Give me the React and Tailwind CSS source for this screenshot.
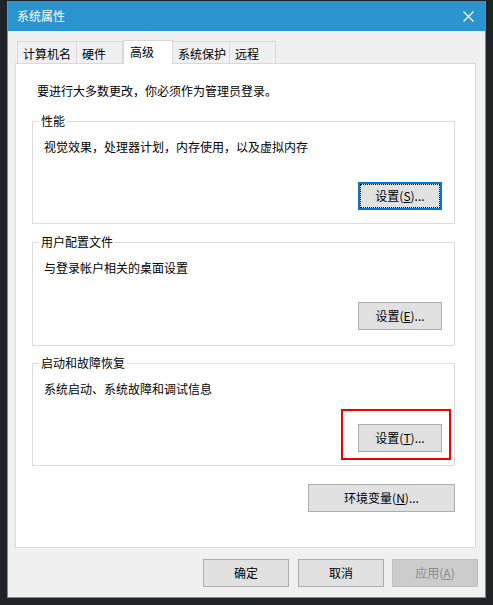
const font = { fontFamily: '"Microsoft YaHei", "Noto Sans CJK SC", "Noto Sans", sans-serif' };

function Btn({ children, focused = false, disabled = false, className = "" }) {
    if (focused) {
        return (
            <button className={`relative h-[28px] w-[84px] bg-[#e1e1e1] border-2 border-[#0078d7] text-[12px] leading-[16px] text-black ${className}`}>
                <span className="absolute inset-0 border border-dotted border-black"></span>
                <span className="relative">{children}</span>
            </button>
        );
    }
    return (
        <button className={`h-[28px] w-[84px] border text-[12px] leading-[16px] ${disabled ? "bg-[#cccccc] border-[#bfbfbf] text-[#8a8a8a]" : "bg-[#e1e1e1] border-[#adadad] text-black"} ${className}`}>
            {children}
        </button>
    );
}

function Group({ title, desc, children, className = "" }) {
    return (
        <div className={`relative ml-[16px] w-[423px] h-[103px] border border-[#dcdcdc] flex flex-col ${className}`}>
            <span className="absolute -top-[9px] left-[6px] bg-white px-[2px] text-[12px] leading-[16px] text-black">{title}</span>
            <p className="pt-[17px] pl-[11px] text-[12px] leading-[16px] text-black">{desc}</p>
            {children}
        </div>
    );
}

const tabs = [
    { name: "计算机名", w: "w-[60px]" },
    { name: "硬件", w: "w-[47px]" },
    { name: "高级", w: "w-[50px]", active: true },
    { name: "系统保护", w: "w-[58px]" },
    { name: "远程", w: "w-[47px]" },
];

export default function App() {
    return (
        <div className="w-[493px] h-[605px] bg-[#1f2227] overflow-hidden pt-[1px] pl-[7px]" style={font}>
            <div className="w-[479px] h-[597px] border border-[#4f97c9] border-t-0 bg-[#f0f0f0] flex flex-col">
                {/* title bar */}
                <div className="h-[30px] bg-[#2b94cf] flex items-center justify-between pl-[9px] pr-[10px]">
                    <span className="text-[12px] leading-[16px] text-white">系统属性</span>
                    <svg width="11" height="11" viewBox="0 0 11 11" className="mr-[1px]">
                        <path d="M0.5 0.5L10.5 10.5M10.5 0.5L0.5 10.5" stroke="white" strokeWidth="1.2" />
                    </svg>
                </div>

                <div className="pl-[7px] pt-[9px]">
                    {/* tabs */}
                    <div className="flex items-end pl-[2px] h-[23px]">
                        {tabs.map((t) => (
                            <div
                                key={t.name}
                                className={`${t.w} border border-[#d9d9d9] text-[12px] leading-[16px] text-black ${t.active ? "h-[24px] bg-white border-b-0 relative z-10 -mb-[1px] pl-[6px] pt-[3px]" : "h-[22px] bg-[#f0f0f0] border-b-0 -ml-[1px] first:ml-0 pl-[5px] pt-[4px]"}`}
                            >
                                {t.name}
                            </div>
                        ))}
                    </div>

                    {/* panel */}
                    <div className="w-[461px] h-[485px] bg-white border border-[#d9d9d9] flex flex-col">
                        <p className="mt-[19px] pl-[21px] text-[12px] leading-[16px] text-black">要进行大多数更改，你必须作为管理员登录。</p>

                        <Group title="性能" desc="视觉效果，处理器计划，内存使用，以及虚拟内存" className="mt-[22px]">
                            <div className="mt-auto flex justify-end pr-[12px] pb-[13px]">
                                <Btn focused>设置(<u>S</u>)...</Btn>
                            </div>
                        </Group>

                        <Group title="用户配置文件" desc="与登录帐户相关的桌面设置" className="mt-[18px] h-[104px]">
                            <div className="mt-auto flex justify-end pr-[12px] pb-[15px]">
                                <Btn>设置(<u>E</u>)...</Btn>
                            </div>
                        </Group>

                        <Group title="启动和故障恢复" desc="系统启动、系统故障和调试信息" className="mt-[17px]">
                            <div className="mt-auto flex justify-end pr-[3px] pb-[5px]">
                                <div className="w-[110px] h-[51px] border-2 border-[#f00000] pl-[15px] pt-[13px]">
                                    <Btn>设置(<u>T</u>)...</Btn>
                                </div>
                            </div>
                        </Group>

                        <div className="mt-[18px] flex justify-end w-[439px]">
                            <Btn className="w-[147px]">环境变量(<u>N</u>)...</Btn>
                        </div>
                    </div>
                </div>

                {/* bottom buttons */}
                <div className="mt-[11px] flex justify-end gap-[9px] pr-[7px]">
                    <Btn className="w-[86px]">确定</Btn>
                    <Btn className="w-[86px]">取消</Btn>
                    <Btn disabled className="w-[86px] -ml-[1px]">应用(<u>A</u>)</Btn>
                </div>
            </div>
        </div>
    );
}
